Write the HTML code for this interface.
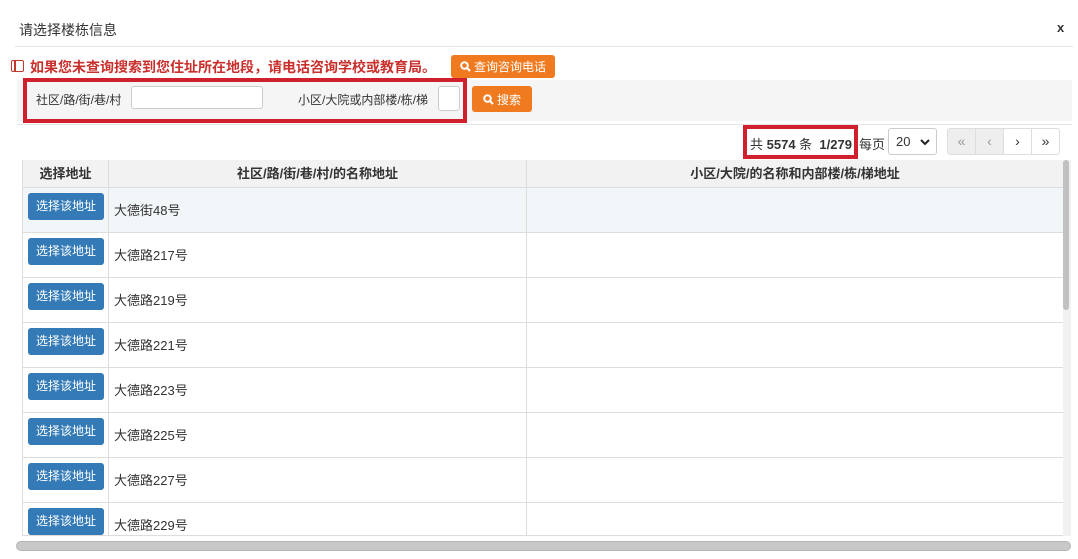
<!DOCTYPE html>
<html><head><meta charset="utf-8"><style>
*{box-sizing:border-box;margin:0;padding:0}
body{width:1078px;height:559px;background:#fff;font-family:"Liberation Sans","Noto Sans CJK SC",sans-serif;font-size:12px;color:#333;position:relative;overflow:hidden}
.a{position:absolute}
.ob{background:#f07a20;color:#fff;border-radius:3px;font-size:12px;display:flex;align-items:center;justify-content:center;gap:3px}
.inp{background:#fff;border:1px solid #ccc;border-radius:3px}
.row{position:absolute;left:22px;width:1041px;height:45px;border-bottom:1px solid #ddd}
.c1{position:absolute;left:0;width:87px;height:100%;border-right:1px solid #ddd;border-left:1px solid #ddd}
.c2{position:absolute;left:87px;width:418px;height:100%;border-right:1px solid #ddd;padding-left:5px;line-height:45px;font-size:13px}
.btn{position:absolute;left:5px;top:5px;width:76px;height:27px;background:#337ab7;color:#fff;border-radius:3px;font-size:12px;text-align:center;line-height:27px}
.pg{position:absolute;top:128px;width:29px;height:27px;border:1px solid #ddd;background:#fff;text-align:center;line-height:25px;font-size:14px;color:#333}
</style></head><body>
<div class="a" style="left:19px;top:20px;font-size:14px;color:#333">请选择楼栋信息</div>
<div class="a" style="left:1057px;top:20px;font-size:13px;font-weight:bold">x</div>
<div class="a" style="left:15px;top:46px;width:1058px;height:1px;background:#e5e5e5"></div>
<div class="a" style="left:11px;top:60px;width:13px;height:12px;border:1.5px solid #c0392b;border-radius:2px"></div>
<div class="a" style="left:14px;top:60px;width:1.5px;height:12px;background:#c0392b"></div>
<div class="a" style="left:30px;top:57px;font-size:14px;color:#c9302c;font-weight:bold">如果您未查询搜索到您住址所在地段，请电话咨询学校或教育局。</div>
<div class="a ob" style="left:451px;top:55px;width:104px;height:23px">
<svg width="11" height="11" viewBox="0 0 11 11"><circle cx="4.5" cy="4.5" r="3.3" fill="none" stroke="#fff" stroke-width="2"/><path d="M7 7l3 3" stroke="#fff" stroke-width="2.2"/></svg>查询咨询电话</div>
<div class="a" style="left:17px;top:80px;width:1055px;height:41px;background:#f5f5f5"></div>
<div class="a" style="left:23px;top:78px;width:444px;height:45px;border:4px solid #d0202e"></div>
<div class="a" style="left:36px;top:91px;font-size:12px">社区/路/街/巷/村</div>
<div class="a inp" style="left:131px;top:86px;width:132px;height:23px"></div>
<div class="a" style="left:298px;top:91px;font-size:12px">小区/大院或内部楼/栋/梯</div>
<div class="a inp" style="left:438px;top:86px;width:22px;height:25px"></div>
<div class="a ob" style="left:472px;top:86px;width:60px;height:26px">
<svg width="11" height="11" viewBox="0 0 11 11"><circle cx="4.5" cy="4.5" r="3.3" fill="none" stroke="#fff" stroke-width="2"/><path d="M7 7l3 3" stroke="#fff" stroke-width="2.2"/></svg> 搜索</div>
<div class="a" style="left:17px;top:124px;width:1055px;height:36px;border-top:1px solid #e5e5e5;background:#fff"></div>
<div class="a" style="left:743px;top:125px;width:115px;height:34px;border:4px solid #d0202e"></div>
<div class="a" style="left:750px;top:134px;font-size:13px">共 <b style="font-weight:600">5574</b> 条 &nbsp;<b style="font-weight:600">1/279</b></div>
<div class="a" style="left:859px;top:134px;font-size:13px">每页</div>
<div class="a inp" style="left:888px;top:128px;width:49px;height:27px;font-size:13px;line-height:25px;padding-left:7px">20 <svg style="position:absolute;right:6px;top:10px" width="10" height="7" viewBox="0 0 10 7"><path d="M1 1l4 4 4-4" fill="none" stroke="#222" stroke-width="2"/></svg></div>
<div class="pg" style="left:947px;background:#eee;color:#999;border-radius:3px 0 0 3px">&laquo;</div>
<div class="pg" style="left:975px;background:#eee;color:#999">&lsaquo;</div>
<div class="pg" style="left:1003px">&rsaquo;</div>
<div class="pg" style="left:1031px;border-radius:0 3px 3px 0">&raquo;</div>
<div class="row" style="top:160px;height:28px;background:#f2f2f2;font-weight:600;font-size:13px">
<div class="c1" style="text-align:center;line-height:27px">选择地址</div>
<div class="c2" style="text-align:center;line-height:27px;padding:0">社区/路/街/巷/村/的名称地址</div>
<div style="position:absolute;left:505px;width:536px;text-align:center;line-height:27px">小区/大院/的名称和内部楼/栋/梯地址</div>
</div>
<div class="row" style="top:188px;background:#f1f6f9"><div class="c1"><div class="btn">选择该地址</div></div><div class="c2">大德街48号</div></div>
<div class="row" style="top:233px"><div class="c1"><div class="btn">选择该地址</div></div><div class="c2">大德路217号</div></div>
<div class="row" style="top:278px"><div class="c1"><div class="btn">选择该地址</div></div><div class="c2">大德路219号</div></div>
<div class="row" style="top:323px"><div class="c1"><div class="btn">选择该地址</div></div><div class="c2">大德路221号</div></div>
<div class="row" style="top:368px"><div class="c1"><div class="btn">选择该地址</div></div><div class="c2">大德路223号</div></div>
<div class="row" style="top:413px"><div class="c1"><div class="btn">选择该地址</div></div><div class="c2">大德路225号</div></div>
<div class="row" style="top:458px"><div class="c1"><div class="btn">选择该地址</div></div><div class="c2">大德路227号</div></div>
<div class="row" style="top:503px;height:33px;overflow:hidden"><div class="c1" style="height:45px"><div class="btn">选择该地址</div></div><div class="c2" style="height:45px">大德路229号</div></div>
<div class="a" style="left:1063px;top:160px;width:8px;height:376px;background:#f1f1f1"></div>
<div class="a" style="left:1063px;top:160px;width:6px;height:150px;background:#c1c1c1;border-radius:3px"></div>
<div class="a" style="left:16px;top:541px;width:1055px;height:10px;background:#c8c8c8;border-radius:5px;border:1px solid #b5b5b5"></div>
</body></html>
